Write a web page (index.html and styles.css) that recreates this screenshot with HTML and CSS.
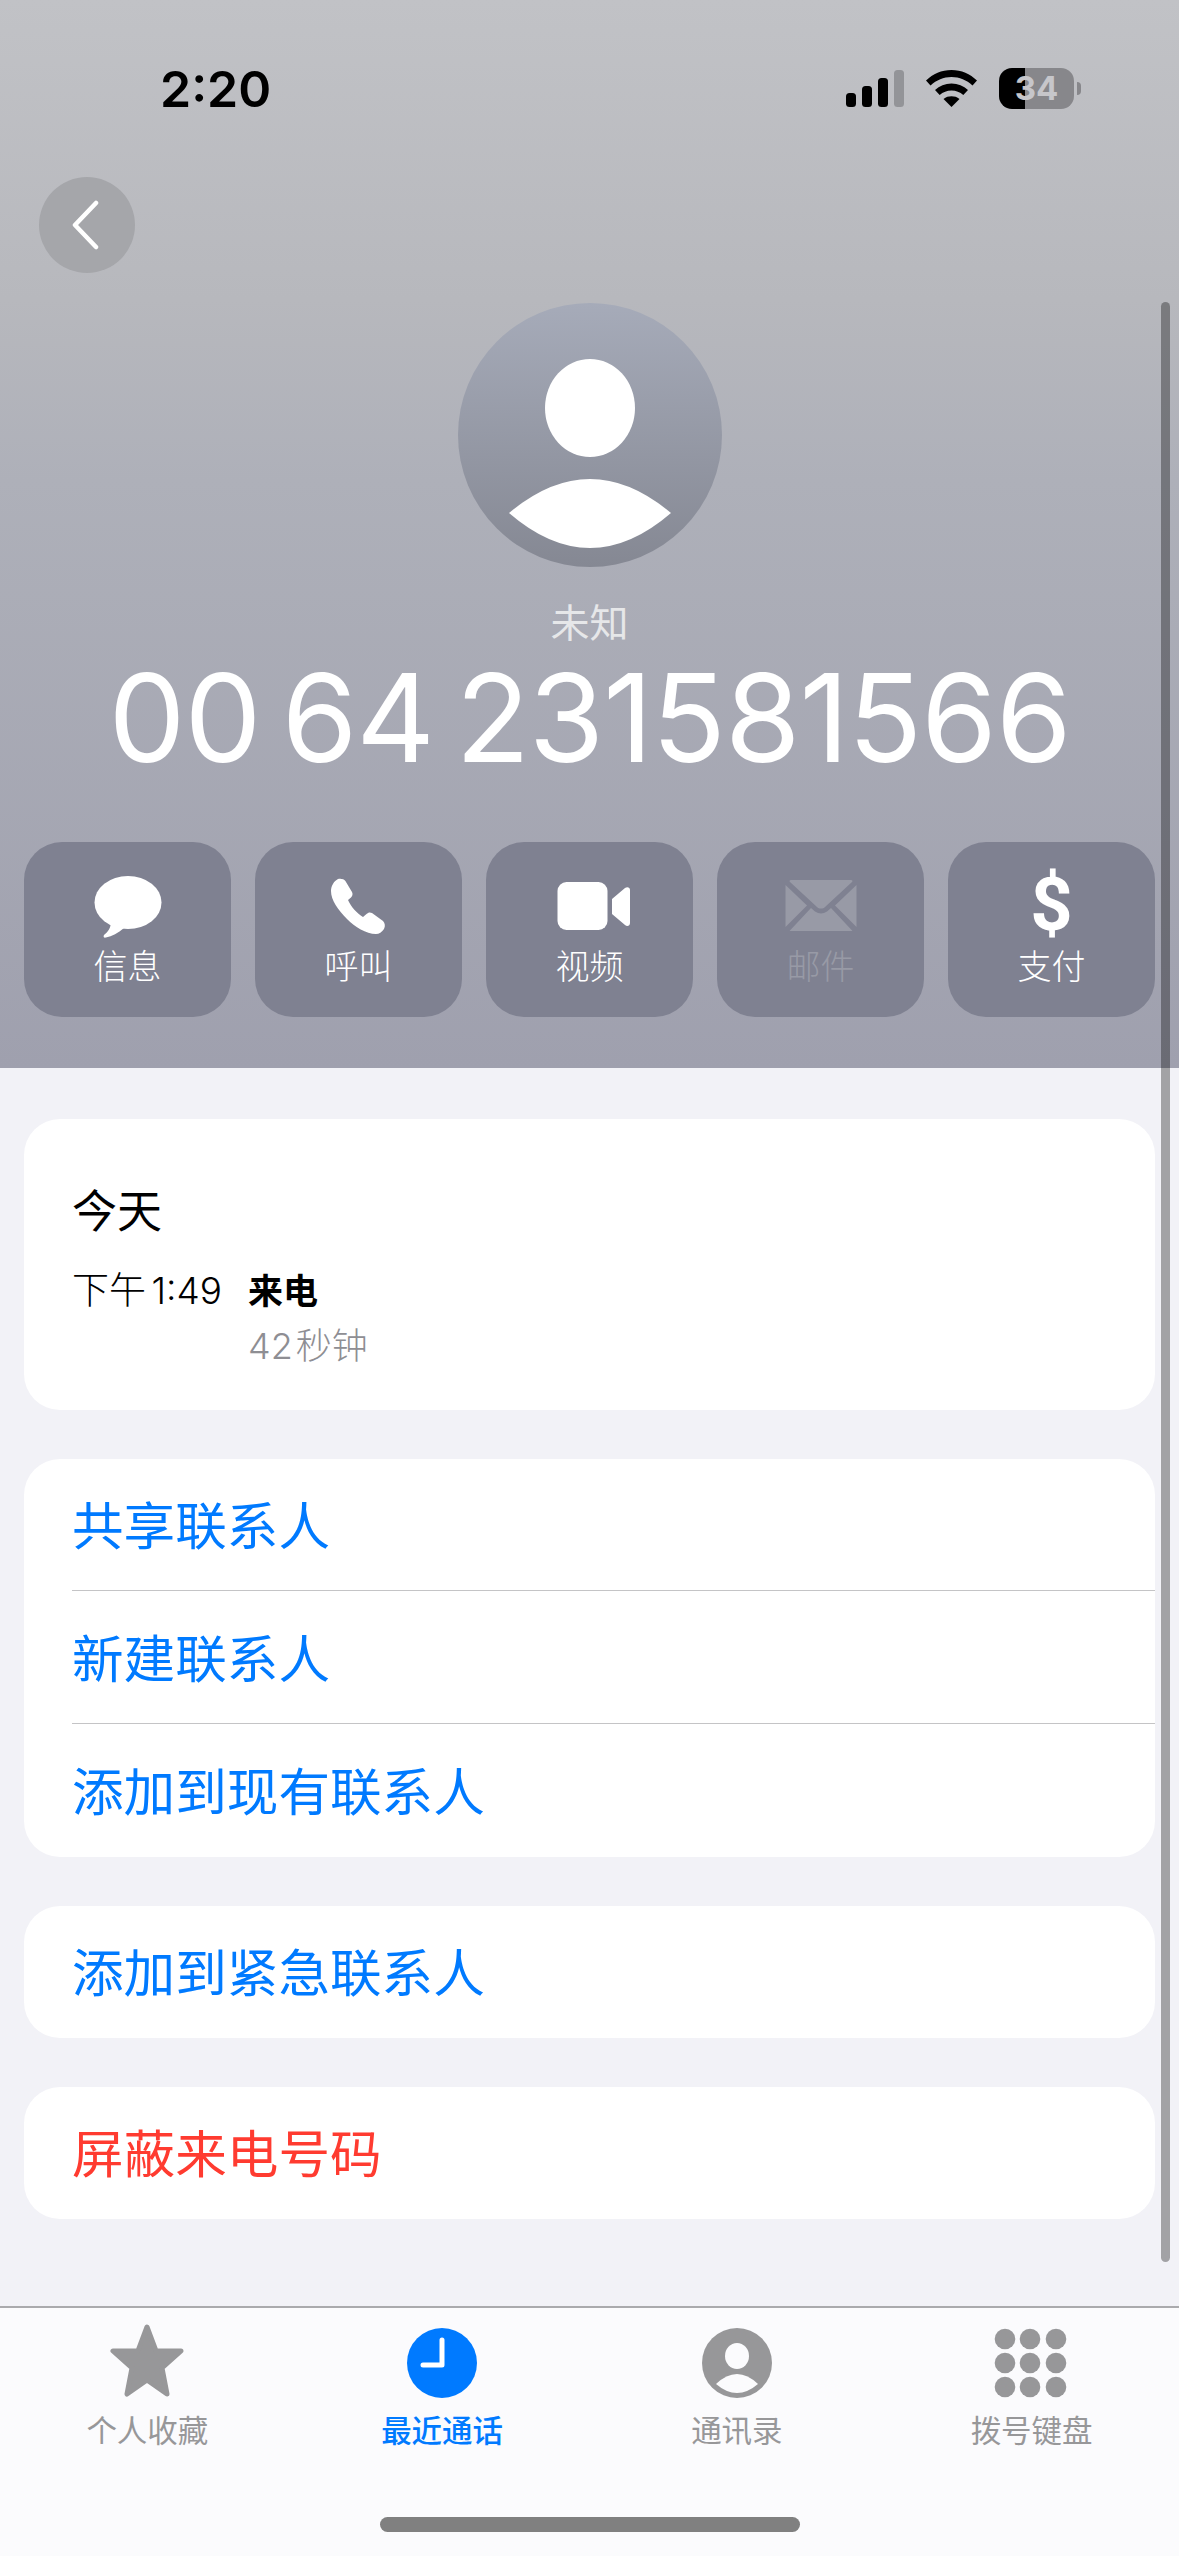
FILE: index.html
```html
<!DOCTYPE html>
<html lang="zh-CN">
<head>
  <meta charset="UTF-8" />
  <meta name="viewport" content="width=device-width, initial-scale=1.0" />
  <title>未知</title>
  <link rel="stylesheet" href="styles.css">
</head>
<body>
  <div class="page">
    <header class="hero">
      <div class="status-bar">
        <span class="clock-text">2:20</span>
        <div class="status-icons">
          <svg class="signal" width="58" height="37" viewBox="0 0 58 37">
            <rect x="0" y="23" width="10" height="14" rx="3.5" />
            <rect x="16" y="16" width="10" height="21" rx="3.5" />
            <rect x="32" y="8" width="10" height="29" rx="3.5" />
            <rect class="signal-off" x="48" y="0" width="10" height="37" rx="3.5" />
          </svg>
          <svg class="wifi" width="51" height="37" viewBox="0 0 51 37">
            <path d="M0 10.5C7 4 15.5 0 25.5 0S44 4 51 10.5L46.5 15.5C40.500 10 33.500 7 25.500 7S10.500 10 4.500 15.500Z" />
            <path d="M9 20C13.500 15.700 19 13.500 25.500 13.500S37.500 15.700 42 20L37.300 25C34 22 30 20.500 25.500 20.500S17 22 13.700 25Z" />
            <path d="M17.500 29C20 27 22.500 26.300 25.500 26.300S31 27 33.500 29L25.500 37Z" />
          </svg>
          <div class="battery">
            <span class="battery-level">34</span>
            <span class="battery-cap"></span>
          </div>
        </div>
      </div>

      <button class="back-button">
        <svg width="28" height="50" viewBox="0 0 28 50"><path d="M25 3L4 25L25 47" /></svg>
      </button>

      <svg class="avatar" width="264" height="264" viewBox="0 0 264 264">
        <defs>
          <linearGradient id="avatar-fill" x1="0" y1="0" x2="0" y2="1">
            <stop offset="0" stop-color="#a6abb9" />
            <stop offset="1" stop-color="#858893" />
          </linearGradient>
        </defs>
        <circle cx="132" cy="132" r="132" fill="url(#avatar-fill)" />
        <ellipse cx="132" cy="105" rx="45" ry="49" fill="#fff" />
        <path d="M51 210Q132 142 213 210Q132 280 51 210Z" fill="#fff" />
      </svg>

      <div class="caller-name">未知</div>
      <div class="caller-number">00 64 231581566</div>

      <div class="actions">
        <div class="action">
          <svg class="action-icon" viewBox="0 0 80 72">
            <ellipse cx="40" cy="33.500" rx="33.500" ry="26.500" />
            <path d="M23 52C23 59 20 63 16 66C15 68 16 69 18 68.500C24 67.500 30 64 36 59Z" />
          </svg>
          <span class="action-label">信息</span>
        </div>
        <div class="action">
          <svg class="action-icon" viewBox="0 0 80 72">
            <path d="M19 10C22 9.500 25 10 26.400 12L33 23C34 25 33.500 27 32 28.500L29 31C32 38 38 44 44 48L47.500 45C49 43.500 51 43 53 44L64 52C66 54 66.500 57 65 60C63 63 60 65 57 65C47 65 36 58 28 50C19 41 12 31 12 22C12 17 15 12 19 10Z" />
          </svg>
          <span class="action-label">呼叫</span>
        </div>
        <div class="action">
          <svg class="action-icon" viewBox="0 0 80 72">
            <rect x="7.500" y="13" width="50" height="48" rx="9" />
            <path d="M62 30L75 19C77 17.500 80 18 80 21V54C80 57 77 58 75 56L62 45Z" />
          </svg>
          <span class="action-label">视频</span>
        </div>
        <div class="action action-disabled">
          <svg class="action-icon" viewBox="0 0 80 72">
            <path d="M10 11H70C71.500 11 72 12 71 13L44 38C42 40 38 40 36 38L9 13C8 12 8.500 11 10 11Z" />
            <path d="M4.500 16L26 36.500L4.500 58Z" />
            <path d="M75.500 16L54 36.500L75.500 58Z" />
            <path d="M8.500 62L30 39L34 42.500C38 45 42 45 46 42.500L50 39L71.500 62Z" />
          </svg>
          <span class="action-label">邮件</span>
        </div>
        <div class="action">
          <span class="action-dollar">$</span>
          <span class="action-label">支付</span>
        </div>
      </div>
    </header>

    <main class="content">
      <section class="card call-card">
        <div class="call-date">今天</div>
        <div class="call-row">
          <span class="call-time">下午 1:49</span>
          <div class="call-info">
            <div class="call-type">来电</div>
            <div class="call-length">42 秒钟</div>
          </div>
        </div>
      </section>

      <section class="card">
        <div class="list-row">共享联系人</div>
        <div class="list-row">新建联系人</div>
        <div class="list-row">添加到现有联系人</div>
      </section>

      <section class="card">
        <div class="list-row">添加到紧急联系人</div>
      </section>

      <section class="card">
        <div class="list-row list-row-danger">屏蔽来电号码</div>
      </section>
    </main>

    <nav class="tab-bar">
      <div class="tab">
        <svg class="tab-icon" viewBox="0 0 80 74">
          <path class="star" d="M40 3L49 27H74L55 44L60 70L40 56L20 70L25 44L6 27H31Z" />
        </svg>
        <span>个人收藏</span>
      </div>
      <div class="tab tab-active">
        <svg class="tab-icon" viewBox="0 0 80 74">
          <circle cx="40" cy="39" r="35" />
          <path class="clock-hands" d="M40 16V41H21" />
        </svg>
        <span>最近通话</span>
      </div>
      <div class="tab">
        <svg class="tab-icon" viewBox="0 0 80 74">
          <circle cx="40" cy="39" r="35" />
          <ellipse class="person" cx="40" cy="32" rx="12" ry="13" />
          <path class="person" d="M19 60Q40 40 61 60Q40 78 19 60Z" />
        </svg>
        <span>通讯录</span>
      </div>
      <div class="tab">
        <svg class="tab-icon" viewBox="0 0 80 74">
          <circle cx="13" cy="15" r="10.300" /><circle cx="38" cy="15" r="10.300" /><circle cx="64" cy="15" r="10.300" />
          <circle cx="13" cy="39" r="10.300" /><circle cx="38" cy="39" r="10.300" /><circle cx="64" cy="39" r="10.300" />
          <circle cx="13" cy="63" r="10.300" /><circle cx="38" cy="63" r="10.300" /><circle cx="64" cy="63" r="10.300" />
        </svg>
        <span>拨号键盘</span>
      </div>
    </nav>

    <div class="scroll-thumb"></div>
    <div class="home-indicator"></div>
  </div>
</body>
</html>
```

FILE: styles.css
```css
* {
  box-sizing: border-box;
}
body {
  margin: 0;
  font-family: Inter, "Noto Sans CJK SC", sans-serif;
  background-color: #f2f2f7;
}
.page {
  position: relative;
  display: flex;
  flex-direction: column;
  width: 1179px;
  height: 2556px;
  overflow: hidden;
}

/* top part */
.hero {
  height: 1068px;
  background: linear-gradient(#c1c2c6, #b7b8bd 28%, #aeb0b9 45%, #9fa0ae);
}
.status-bar {
  display: flex;
  justify-content: space-between;
  align-items: center;
  height: 177px;
  padding: 0 105px 0 160px;
}
.clock-text {
  font-size: 50px;
  font-weight: 600;
  color: #000;
}
.status-icons {
  display: flex;
  align-items: center;
  gap: 22px;
}
.signal {
  fill: #000;
}
.signal .signal-off {
  fill: #939498;
}
.wifi {
  fill: #000;
}
.battery {
  position: relative;
  width: 75px;
  height: 41px;
  border-radius: 13px;
  background: linear-gradient(to right, #000 26px, #87878b 26px);
  text-align: center;
  font-size: 33px;
  font-weight: 700;
  line-height: 41px;
  color: #c6c6ca;
}
.battery-level {
  display: block;
}
.battery-cap {
  position: absolute;
  top: 14px;
  right: -7px;
  width: 4px;
  height: 13px;
  border-radius: 0 6px 6px 0;
  background-color: #87878b;
}
.back-button {
  display: flex;
  align-items: center;
  justify-content: center;
  width: 96px;
  height: 96px;
  margin-left: 39px;
  padding: 0 4px 0 0;
  border: none;
  border-radius: 50%;
  background-color: #a5a6aa;
}
.back-button path {
  fill: none;
  stroke: #fff;
  stroke-width: 4.500;
  stroke-linecap: round;
  stroke-linejoin: round;
}
.avatar {
  display: block;
  margin: 30px auto 0;
}
.caller-name {
  margin-top: 28px;
  font-size: 39px;
  line-height: 56px;
  text-align: center;
  color: #e6e7e9;
}
.caller-number {
  margin-top: 5px;
  font-size: 122px;
  font-weight: 400;
  letter-spacing: -1px;
  word-spacing: -12px;
  line-height: 124px;
  text-align: center;
  white-space: nowrap;
  color: #fff;
}
.actions {
  display: flex;
  gap: 24px;
  margin-top: 62px;
  padding: 0 24px;
}
.action {
  display: flex;
  flex-direction: column;
  align-items: center;
  width: 207px;
  height: 175px;
  padding-top: 27px;
  border-radius: 38px;
  background-color: #7f8191;
  fill: #fff;
  color: #fff;
}
.action-icon {
  display: block;
  width: 80px;
  height: 72px;
}
.action-dollar {
  height: 72px;
  font-family: Roboto, sans-serif;
  font-size: 74px;
  font-weight: 700;
  line-height: 72px;
}
.action-label {
  font-size: 34px;
  font-weight: 300;
  line-height: 52px;
}
.action-disabled {
  fill: #989aa6;
  color: #989aa6;
}

/* lists */
.content {
  display: flex;
  flex: 1;
  flex-direction: column;
  gap: 49px;
  padding: 51px 24px 0;
}
.card {
  border-radius: 36px;
  background-color: #fff;
}
.call-card {
  height: 291px;
  padding: 62px 48px 0;
}
.call-date {
  font-size: 45px;
  line-height: 62px;
  color: #000;
}
.call-row {
  display: flex;
  margin-top: 21px;
}
.call-time {
  width: 176px;
  font-size: 37px;
  font-weight: 300;
  word-spacing: -5px;
  line-height: 54px;
  color: #000;
}
.call-type {
  font-size: 35px;
  font-weight: 700;
  line-height: 54px;
  color: #000;
}
.call-length {
  margin-top: 2px;
  font-size: 36px;
  font-weight: 300;
  word-spacing: -7px;
  line-height: 52px;
  color: #8e8e93;
}
.list-row {
  position: relative;
  height: 133px;
  padding-left: 48px;
  font-size: 51.600px;
  line-height: 134px;
  color: #007aff;
}
.list-row:last-child {
  height: 132px;
}
.list-row + .list-row::before {
  content: "";
  position: absolute;
  top: -2px;
  left: 48px;
  right: 0;
  height: 1px;
  background-color: #c4c4c6;
}
.list-row-danger {
  color: #ff3b30;
}

/* bottom tabs */
.tab-bar {
  display: flex;
  height: 250px;
  padding-top: 16px;
  border-top: 2px solid #aaaaad;
  background-color: #fbfbfd;
}
.tab {
  display: flex;
  flex: 1;
  flex-direction: column;
  align-items: center;
  font-size: 30.500px;
  font-weight: 400;
  line-height: 48px;
  color: #979799;
  fill: #979799;
}
.tab-icon {
  display: block;
  width: 80px;
  height: 74px;
  margin-bottom: 9px;
}
.tab-active {
  font-weight: 500;
  color: #007aff;
  fill: #007aff;
}
.star {
  stroke: #979799;
  stroke-width: 5;
  stroke-linejoin: round;
}
.clock-hands {
  fill: none;
  stroke: #fff;
  stroke-width: 5;
  stroke-linecap: round;
  stroke-linejoin: round;
}
.person {
  fill: #fbfbfd;
}

/* overlays */
.scroll-thumb {
  position: absolute;
  top: 302px;
  right: 9px;
  width: 9px;
  height: 1960px;
  border-radius: 5px;
  background-color: rgba(0, 0, 0, 0.33);
}
.home-indicator {
  position: absolute;
  bottom: 24px;
  left: 380px;
  width: 420px;
  height: 15px;
  border-radius: 8px;
  background-color: #808080;
}
```
